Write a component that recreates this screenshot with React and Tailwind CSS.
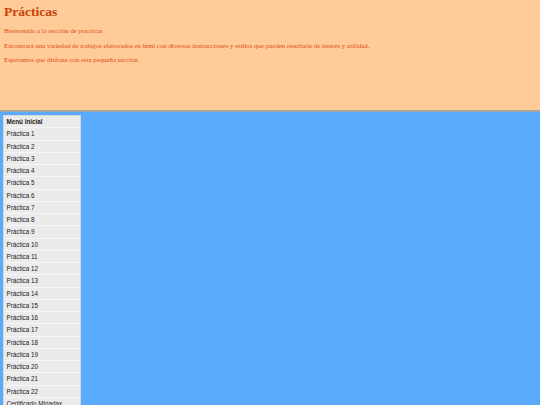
import React from "react";

const practicas = Array.from({ length: 22 }, (_, i) => `Práctica ${i + 1}`);

const App = () => {
  return (
    <div className="min-h-[405px] bg-[#5aabfc]">
      {/* Cabecera */}
      <header
        className="h-[112px] bg-[#ffcc99] border-b-2 border-[#aaa49c] px-[4px] pt-[3px] text-[#e04a1a]"
        style={{ fontFamily: '"Liberation Serif", serif' }}
      >
        <h1 className="text-[13.5px] font-bold leading-[18px] text-[#c8420a]">
          Prácticas
        </h1>
        <p className="mt-[3px] text-[6.8px] leading-[14.5px]">
          Bienvenido a la sección de practicas
        </p>
        <p className="text-[6.8px] leading-[14.5px]">
          Encontrará una variedad de trabajos elaborados en html con diversas
          instrucciones y estilos que pueden resultarle de interés y utilidad.
        </p>
        <p className="text-[6.8px] leading-[14.5px]">
          Esperamos que disfrute con esta pequeña sección
        </p>
      </header>

      {/* Menú lateral */}
      <nav className="pl-[3px] pt-[3px]">
        <ul
          className="w-[78px] border border-[#d8d8d8] bg-[#ebebeb] text-[6.3px] text-[#1a1a1a]"
          style={{ fontFamily: '"Liberation Sans", sans-serif' }}
        >
          <li className="h-[12.25px] leading-[12px] border-b border-[#f6f6f6] px-[2.5px] font-bold">
            Menú Inicial
          </li>
          {practicas.map((p) => (
            <li
              key={p}
              className="h-[12.25px] leading-[12px] border-b border-[#f6f6f6] px-[2.5px]"
            >
              {p}
            </li>
          ))}
          <li className="h-[12.25px] leading-[12px] px-[2.5px]">
            Certificado Miriadax
          </li>
        </ul>
      </nav>
    </div>
  );
};

export default App;
